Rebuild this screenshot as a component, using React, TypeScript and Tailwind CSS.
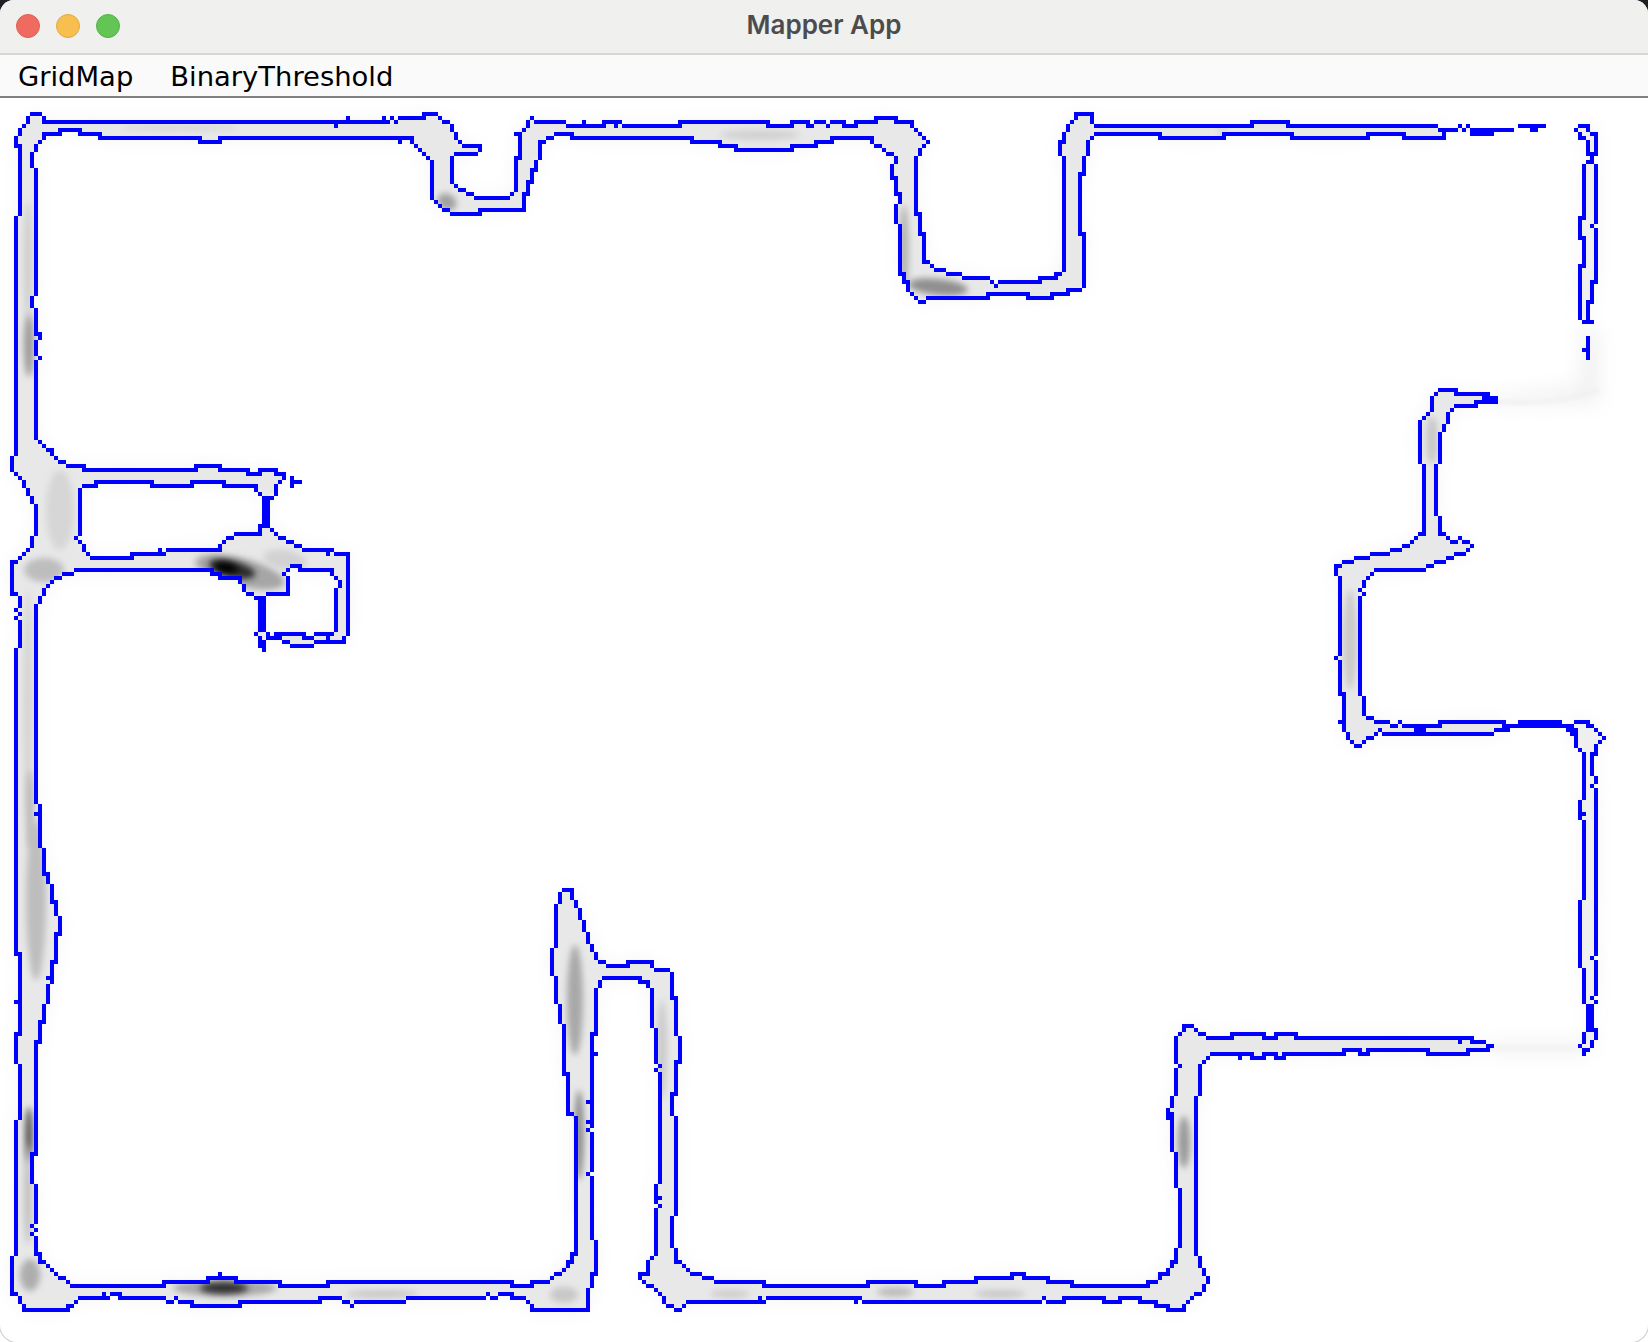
import React from "react";

type Pt = [number, number];

const pts = (s: string): Pt[] =>
  s
    .trim()
    .split(/\s+/)
    .map((p) => {
      const [x, y] = p.split(",").map(Number);
      return [x, y] as Pt;
    });

// the map is drawn on a 4px grid, like the Java panel does
const cellPath = (lines: Pt[][]) => {
  const seen = new Set<string>();
  const add = (cx: number, cy: number) => seen.add(`${cx},${cy}`);
  const snap = ([x, y]: Pt): Pt => [Math.floor((x - 2) / 4), Math.floor(y / 4)];
  lines.forEach((line) => {
    for (let i = 0; i < line.length; i++) {
      const [x0, y0] = snap(line[i]);
      const [x1, y1] = snap(line[Math.min(i + 1, line.length - 1)]);
      const n = Math.max(Math.abs(x1 - x0), Math.abs(y1 - y0), 1);
      for (let k = 0; k <= n; k++) {
        add(Math.round(x0 + ((x1 - x0) * k) / n), Math.round(y0 + ((y1 - y0) * k) / n));
      }
    }
  });
  return [...seen]
    .map((c) => {
      const [cx, cy] = c.split(",").map(Number);
      return `M${cx * 4 + 2} ${cy * 4}h4v4h-4z`;
    })
    .join("");
};

const poly = (line: Pt[]) => "M" + line.map(([x, y]) => `${x} ${y}`).join("L") + "Z";

const topOuter = pts(
  "40,115 42,122 334,122 336,126 346,118 348,122 382,122 384,118 388,122 392,118 396,122 400,118 422,118 424,114 436,114 440,118 450,126 456,136 462,146 478,146 480,150 476,154 456,154 452,158 452,180 457,185 463,190 471,194 478,198 509,198 513,192 516,187 516,157 519,157 519,137 517,133 523,128 527,122 532,117 534,122 565,122 567,126 582,126 584,122 587,126 602,126 603,122 614,122 616,126 620,122 622,126 678,126 679,122 766,122 766,126 790,126 790,122 806,122 808,126 815,122 825,122 828,126 830,122 842,122 842,126 857,126 857,122 874,122 874,118 894,118 894,122 910,122 911,126 916,130 921,134 924,138 928,142 924,146 920,150 916,157 916,212 920,212 920,232 924,232 924,260 927,262 932,266 940,270 953,274 973,278 986,278 990,282 996,285 998,282 1041,282 1041,278 1054,278 1057,274 1063,270 1064,267 1064,157 1060,153 1060,142 1064,140 1064,133 1068,127 1072,122 1075,118 1075,114 1090,114 1090,118 1092,122 1094,126 1250,126 1250,122 1287,122 1287,126 1437,126 1438,130 1457,130 1458,126 1463,130 1467,126 1470,130 1510,130"
);
const topInner = pts(
  "47,134 58,134 58,130 78,130 78,134 98,134 98,138 198,138 198,142 218,142 218,138 398,138 400,142 403,138 410,138 412,142 415,146 420,150 425,154 428,158 432,163 432,198 435,202 440,207 447,210 455,214 478,214 478,210 522,210 524,207 524,193 527,192 527,180 532,180 532,168 535,168 535,160 540,158 540,143 546,138 554,134 570,134 570,138 690,138 690,142 718,142 718,146 734,146 734,150 790,150 790,146 814,146 814,142 830,142 830,138 870,138 873,142 880,146 884,150 890,155 895,162 892,165 892,176 895,177 895,192 900,193 900,203 895,205 895,223 900,225 900,272 904,273 904,280 908,282 908,290 911,293 915,297 922,302 927,297 986,297 986,293 1026,293 1026,297 1050,297 1050,293 1066,293 1066,289 1080,289 1084,283 1084,233 1080,232 1080,172 1084,172 1084,157 1088,155 1088,140 1092,137 1094,134 1160,134 1160,138 1225,138 1225,134 1290,134 1290,138 1355,138 1366,138 1366,134 1402,134 1402,138 1445,138 1443,132"
);
const leftOuter = pts(
  "40,115 32,115 24,127 16,137 16,147 20,147 20,213 16,217 16,453 12,457 12,470 16,474 20,478 24,483 28,492 32,500 36,508 36,535 32,537 32,547 28,550 24,554 20,558 12,562 12,593 16,594 20,597 20,607 16,610 20,613 16,617 20,620 20,647 16,648 16,952 20,953 20,1000 16,1003 20,1008 20,1032 16,1033 16,1063 20,1065 20,1118 16,1120 16,1255 12,1257 12,1292 16,1293 20,1300 23,1308 23,1310 66,1310 68,1306 74,1302 78,1298 102,1298 104,1294 107,1298 111,1294 121,1294 121,1298 162,1298 166,1302 174,1298 178,1302 190,1302 190,1306 238,1306 238,1302 321,1302 321,1298 341,1298 346,1302 352,1306 355,1302 405,1302 406,1298 482,1298 487,1294 493,1298 498,1294 513,1294 513,1298 525,1298 529,1302 531,1310 586,1310 588,1305 588,1290 592,1287 592,1272 596,1272 596,1240 592,1238 592,1177 588,1173 592,1170 592,1133 588,1130 592,1126 588,1122 592,1120 592,1108 588,1103 592,1100 592,1056 596,1054 592,1052 592,1033 596,1032 596,988 600,987 600,980 602,978 638,978 638,982 646,982 648,986 652,988 652,1027 656,1028 656,1063 660,1066 656,1070 660,1072 660,1183 656,1184 656,1196 660,1198 656,1202 660,1206 656,1208 656,1255 652,1257 648,1260 648,1275 640,1274 640,1278 644,1282 650,1286 656,1290 660,1295 664,1302 670,1306 678,1310 684,1306 687,1302 758,1302 760,1298 764,1302 766,1298 854,1298 856,1302 860,1298 862,1302 1041,1302 1044,1298 1046,1302 1062,1302 1062,1298 1102,1298 1102,1302 1118,1302 1118,1298 1138,1298 1138,1302 1154,1302 1154,1306 1166,1306 1166,1310 1182,1310 1184,1306 1188,1302 1196,1294 1204,1290 1204,1286 1208,1280 1204,1275 1204,1270 1200,1267 1200,1257 1196,1255 1196,1097 1200,1095 1200,1065 1204,1062 1208,1058 1210,1054 1238,1054 1240,1058 1242,1054 1250,1054 1250,1058 1262,1058 1262,1054 1274,1054 1274,1058 1282,1058 1282,1054 1342,1054 1342,1050 1358,1050 1358,1054 1366,1054 1366,1050 1426,1050 1426,1054 1466,1054 1466,1050 1482,1050 1490,1046"
);
const innerSide = pts(
  "47,134 45,135 40,142 32,153 32,167 36,168 36,295 32,297 32,307 36,308 36,332 40,333 40,339 36,341 36,355 40,357 36,360 36,438 40,442 44,446 50,450 50,453 56,458 62,462 66,466 82,466 82,470 194,470 194,466 218,466 218,470 246,470 246,474 258,474 258,470 274,470 274,474 285,474 285,478 280,482 275,487 275,493 268,497 268,525 272,529 276,534 282,538 290,542 298,546 302,550 326,550 328,554 332,550 334,554 348,554 348,558 348,632 344,637 342,642 315,642 313,646 290,646 289,642 283,642 280,637 267,637 262,643 262,650 260,638 256,632 258,628 258,597 248,594 244,588 240,582 238,578 220,578 218,574 212,574 210,570 74,570 73,574 63,574 55,578 52,582 48,586 44,590 44,595 40,597 40,603 36,605 36,803 40,805 40,812 36,813 40,817 40,847 44,848 44,872 48,873 48,883 52,885 52,900 56,901 56,915 60,917 60,932 56,933 56,960 52,961 52,976 48,978 52,982 48,984 48,1003 44,1005 44,1020 40,1021 40,1040 36,1041 36,1152 31,1153 31,1183 36,1185 36,1223 31,1225 36,1229 31,1233 36,1237 36,1252 40,1253 40,1260 44,1262 47,1266 51,1270 55,1274 62,1278 69,1282 74,1286 162,1286 162,1282 207,1282 207,1278 219,1278 220,1274 222,1278 234,1278 234,1282 278,1282 278,1286 326,1286 326,1282 510,1282 510,1286 533,1286 533,1282 546,1282 550,1278 556,1274 562,1268 568,1262 572,1260 572,1253 577,1252 577,1217 574,1215 574,1120 572,1113 568,1112 568,1073 564,1072 564,1025 560,1023 560,1005 556,1003 556,977 552,975 552,948 556,947 556,905 560,903 560,893 562,890 570,890 572,896 576,903 580,913 584,927 588,938 592,948 596,956 602,962 606,966 626,966 626,962 650,962 652,966 654,970 666,970 672,974 672,996 676,996 676,1035 680,1037 680,1060 676,1060 676,1092 672,1092 672,1115 676,1117 676,1215 672,1216 672,1247 676,1248 676,1260 680,1262 684,1266 688,1270 697,1274 712,1278 718,1282 762,1282 762,1286 866,1286 866,1282 914,1282 914,1286 942,1286 942,1282 977,1282 977,1278 1010,1278 1010,1274 1022,1274 1022,1278 1046,1278 1046,1282 1070,1282 1070,1286 1146,1286 1146,1282 1154,1282 1158,1274 1166,1274 1168,1268 1172,1262 1176,1260 1176,1248 1180,1247 1180,1188 1176,1187 1176,1152 1172,1151 1172,1112 1168,1116 1172,1097 1176,1095 1176,1068 1180,1066 1176,1063 1176,1037 1180,1033 1184,1030 1184,1026 1193,1026 1196,1030 1202,1034 1206,1038 1230,1038 1230,1034 1262,1034 1262,1038 1274,1038 1274,1034 1294,1034 1294,1038 1458,1038 1460,1042 1462,1038 1470,1038 1470,1042 1482,1042 1490,1046"
);
const room1 = pts(
  "83,486 94,486 94,482 150,482 150,486 190,486 190,482 222,482 222,486 254,486 257,490 261,495 264,500 264,525 260,527 258,534 238,534 227,538 220,546 218,550 167,550 163,554 160,550 158,554 130,554 130,558 91,558 88,554 84,549 80,543 76,537 80,535 80,488 83,486"
);
const room2 = pts(
  "275,633 302,633 303,637 313,637 315,633 326,633 328,637 332,633 336,630 336,588 340,587 340,582 336,578 332,573 330,570 298,570 298,566 290,566 285,573 288,577 288,592 285,594 267,594 262,598 262,620 264,630 268,637 275,633"
);

// right hand pieces
const rightTop = pts(
  "1576,130 1578,126 1586,126 1588,130 1596,132 1596,152 1592,152 1592,162 1596,164 1596,223 1592,226 1596,228 1596,280 1592,280 1592,300 1588,300 1588,316 1586,323 1580,316 1580,264 1584,264 1584,236 1580,236 1580,216 1584,216 1584,164 1588,162 1590,158 1588,153 1588,143 1585,138 1580,138 1580,134 1576,130"
);
const rightSideA = pts(
  "1494,398 1482,394 1454,394 1454,390 1438,390 1436,393 1432,397 1432,407 1428,412 1422,418 1418,423 1419,431 1419,462 1424,465 1424,532 1420,534 1416,538 1406,546 1396,550 1380,554 1360,558 1342,562 1336,565 1336,575 1340,577 1340,650 1336,656 1340,660 1340,692 1344,692 1344,720 1340,722 1344,728 1348,736 1352,742 1358,746 1364,742 1368,738 1374,734 1380,730 1383,734 1493,734 1497,730 1506,730 1506,726 1558,726"
);
const rightSideB = pts(
  "1494,402 1474,402 1474,406 1454,406 1452,410 1448,413 1448,423 1444,427 1440,432 1440,462 1436,465 1436,510 1436,515 1440,520 1440,532 1444,534 1448,538 1454,542 1460,538 1467,542 1472,545 1468,550 1460,554 1448,558 1438,562 1428,566 1422,570 1374,570 1370,574 1364,580 1360,588 1362,594 1360,597 1360,695 1364,697 1364,715 1369,718 1382,722 1394,726 1400,722 1406,726 1418,726 1438,726 1438,722 1502,722 1502,726"
);
const rightCol = pts(
  "1562,726 1573,726 1574,722 1586,722 1586,726 1593,726 1596,730 1600,734 1604,738 1600,742 1596,747 1596,752 1592,752 1592,775 1596,777 1596,783 1592,787 1596,793 1596,952 1592,956 1596,960 1596,995 1592,998 1596,1002 1592,1005 1592,1028 1596,1028 1596,1038 1592,1042 1588,1048 1584,1053 1580,1047 1584,1043 1584,1032 1588,1030 1588,1005 1584,1003 1584,968 1580,967 1580,900 1584,898 1584,820 1580,818 1584,814 1580,812 1580,800 1584,798 1584,752 1580,750 1576,747 1576,733 1568,730 1562,726"
);

const extras: Pt[][] = [
  pts("1470,134 1490,134"),
  pts("1518,126 1542,126"),
  pts("1530,130 1534,130"),
  pts("1586,336 1588,356"),
  pts("1584,350 1588,350"),
  pts("1482,398 1494,398"),
  pts("1482,402 1494,402"),
  pts("1518,722 1526,722"),
  pts("1530,722 1542,722"),
  pts("1546,722 1558,722"),
  pts("1414,730 1422,730"),
  pts("1568,730 1574,730"),
  pts("292,478 292,487"),
  pts("296,482 298,482"),
  pts("268,497 268,525"),
  pts("258,644 262,650"),
  pts("1588,1005 1592,1030"),
  pts("1586,316 1590,322"),
];

const bluePath = cellPath([
  topOuter,
  topInner,
  leftOuter,
  innerSide,
  room1,
  room2,
  rightTop,
  rightSideA,
  rightSideB,
  rightCol,
  ...extras,
]);

const mainWall =
  poly([...topOuter.slice().reverse(), ...leftOuter, ...innerSide.slice().reverse(), ...topInner]) +
  poly(room1) +
  poly(room2);

const rightWall = poly([...rightSideA, ...rightSideB.slice().reverse()]);
const rightColWall = poly(rightCol) + poly(rightTop);
const allWalls = mainWall + rightWall + rightColWall;

// darker spots where the sensor hit the wall most often: x, y, rx, ry, rotation, grey
const spots: [number, number, number, number, number, string][] = [
  [240, 572, 46, 14, 14, "#a6a6a6"],
  [232, 569, 24, 8, 14, "#2a2a2a"],
  [226, 568, 12, 5, 10, "#000000"],
  [225, 1288, 52, 8, 0, "#a8a8a8"],
  [224, 1288, 24, 6, 0, "#333333"],
  [29, 1135, 4, 28, 0, "#555555"],
  [28, 1195, 4, 50, 0, "#c0c0c0"],
  [938, 287, 30, 8, 6, "#8f8f8f"],
  [904, 250, 5, 45, 0, "#b4b4b4"],
  [447, 202, 10, 8, 30, "#a0a0a0"],
  [29, 345, 5, 32, 0, "#9a9a9a"],
  [28, 260, 4, 60, 0, "#cccccc"],
  [28, 700, 4, 110, 0, "#d2d2d2"],
  [36, 900, 10, 80, 0, "#bdbdbd"],
  [30, 810, 4, 40, 0, "#b8b8b8"],
  [575, 1000, 8, 55, 0, "#a8a8a8"],
  [579, 1135, 5, 45, 0, "#8e8e8e"],
  [662, 1050, 5, 50, 0, "#cacaca"],
  [1184, 1142, 6, 26, 0, "#9a9a9a"],
  [30, 1275, 10, 16, 0, "#adadad"],
  [44, 570, 20, 12, 0, "#bdbdbd"],
  [60, 510, 14, 40, 0, "#d6d6d6"],
  [564, 1295, 14, 8, 0, "#c8c8c8"],
  [382, 1294, 36, 4, 0, "#c8c8c8"],
  [895, 1292, 18, 5, 0, "#bcbcbc"],
  [730, 1294, 20, 4, 0, "#cccccc"],
  [1000, 1294, 26, 4, 0, "#c8c8c8"],
  [760, 135, 40, 5, 0, "#d0d0d0"],
  [1350, 640, 7, 50, 0, "#cacaca"],
  [1432, 440, 6, 24, 0, "#c8c8c8"],
  [180, 128, 60, 3, 0, "#d6d6d6"],
  [1222, 132, 5, 10, 0, "#dcdcdc"],
  [285, 560, 22, 10, 10, "#d2d2d2"],
];

const CurrentMap = () => (
  <svg viewBox="0 98 1648 1244" className="block w-[1648px] h-[1244px]">
    <defs>
      <filter id="soft" x="-5%" y="-5%" width="110%" height="110%">
        <feGaussianBlur stdDeviation="1.6" />
      </filter>
      <filter id="haze" x="-5%" y="-5%" width="110%" height="110%">
        <feGaussianBlur stdDeviation="9" />
      </filter>
      <filter id="spot" x="-80%" y="-80%" width="260%" height="260%">
        <feGaussianBlur stdDeviation="3" />
      </filter>
      <clipPath id="walls">
        <path d={allWalls} clipRule="evenodd" />
      </clipPath>
    </defs>
    <g filter="url(#haze)" opacity="0.11" fill="#8a8a8a" fillRule="evenodd">
      <path d={mainWall} />
      <path d={rightWall} />
      <path d={rightColWall} />
      <path d="M1494 396L1600 382V404L1494 406Z" />
      <path d="M1490 1042H1590V1054H1490Z" />
      <path d="M1580 330H1600V400H1580Z" />
    </g>
    <g filter="url(#soft)" fill="#e8e8e8" fillRule="evenodd">
      <path d={mainWall} />
      <path d={rightWall} />
      <path d={rightColWall} fill="#efefef" />
      <path d="M1494 398C1530 404 1570 398 1598 386L1600 392C1570 404 1530 406 1494 404Z" fill="#f2f2f2" />
      <path d="M1490 1044H1584V1052H1490Z" fill="#f4f4f4" />
    </g>
    <g clipPath="url(#walls)">
      {spots.map(([x, y, rx, ry, rot, fill], i) => (
        <ellipse
          key={i}
          cx={x}
          cy={y}
          rx={rx}
          ry={ry}
          fill={fill}
          transform={`rotate(${rot} ${x} ${y})`}
          filter="url(#spot)"
        />
      ))}
    </g>
    <path d={bluePath} fill="#0000ff" shapeRendering="crispEdges" />
  </svg>
);

const App = () => {
  return (
    <div className="w-[1648px] h-[1342px] bg-[#1f2024] overflow-hidden">
      <div className="flex flex-col h-full rounded-t-[14px] overflow-hidden bg-white">
        <div className="relative h-[55px] shrink-0 bg-[#f0f0ef] border-b-2 border-[#d6d6d5] flex items-center pl-[16px] pb-[2px] gap-[16px]">
          <span className="w-[24px] h-[24px] rounded-full bg-[#ef6b5f] border border-[#de5f53]" />
          <span className="w-[24px] h-[24px] rounded-full bg-[#f6bf50] border border-[#e0a942]" />
          <span className="w-[24px] h-[24px] rounded-full bg-[#62c554] border border-[#55b048]" />
          <div className="absolute inset-0 pb-[4px] flex items-center justify-center font-['Inter',sans-serif] font-semibold text-[26px] text-[#4c4c4c]">
            Mapper App
          </div>
        </div>
        <div className="h-[43px] shrink-0 bg-[#fafafa] border-b-2 border-[#808080] flex items-center pl-[18px] pt-[2px] gap-[37px] font-['DejaVu_Sans',sans-serif] text-[27.4px] text-black">
          <span>GridMap</span>
          <span>BinaryThreshold</span>
        </div>
        <div className="flex-1 bg-white -mx-px -mb-px border border-t-0 border-[#cfcfcf] rounded-b-[18px] overflow-hidden">
          <CurrentMap />
        </div>
      </div>
    </div>
  );
};

export default App;
